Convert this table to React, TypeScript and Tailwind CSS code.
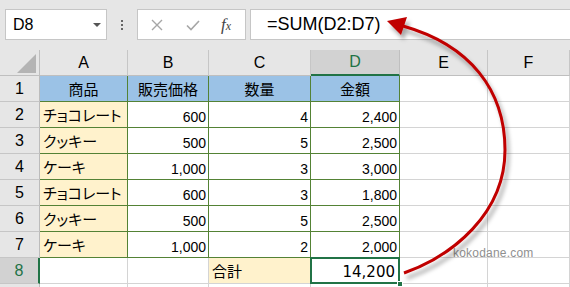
import React from "react";

const font = "font-['Liberation_Sans','Noto_Sans_CJK_JP',sans-serif]";

type Row = { a: string; b: string; c: string; d: string };

const rows: Row[] = [
  { a: "チョコレート", b: "600", c: "4", d: "2,400" },
  { a: "クッキー", b: "500", c: "5", d: "2,500" },
  { a: "ケーキ", b: "1,000", c: "3", d: "3,000" },
  { a: "チョコレート", b: "600", c: "3", d: "1,800" },
  { a: "クッキー", b: "500", c: "5", d: "2,500" },
  { a: "ケーキ", b: "1,000", c: "2", d: "2,000" },
];

function ColHead({ label, active }: { label: string; active?: boolean }) {
  return (
    <div
      className={
        active
          ? "flex items-center justify-center bg-[#d2d2d2] border-r border-[#bfbfbf] border-b-2 border-b-[#217346] text-[#217346] text-[16px]"
          : "flex items-center justify-center bg-[#e6e6e6] border-r border-[#c6c6c6] border-b border-b-[#bfbfbf] text-black text-[16px]"
      }
    >
      {label}
    </div>
  );
}

function RowHead({ n, active }: { n: number; active?: boolean }) {
  return (
    <div
      className={
        active
          ? "flex items-center justify-center bg-[#d2d2d2] border-b border-[#c6c6c6] border-r-2 border-r-[#217346] text-[#217346] text-[16px]"
          : "flex items-center justify-center bg-[#e6e6e6] border-b border-[#c6c6c6] border-r border-r-[#bcbcbc] text-black text-[16px]"
      }
    >
      {n}
    </div>
  );
}

const green = "border-r border-b border-[#548235]";
const gray = "border-r border-b border-[#d4d4d4]";

export default function App() {
  return (
    <div className={`relative w-[570px] h-[287px] overflow-hidden bg-white ${font}`}>
      {/* formula bar */}
      <div className="h-[50px] bg-[#e6e6e6] flex items-start pt-[9px]">
        <div className="ml-[5px] w-[102px] h-[31px] bg-white border border-[#c6c6c6] flex items-center pl-[7px] pr-[5px] text-[16px] text-black">
          <span className="flex-1">D8</span>
          <span className="w-0 h-0 border-l-[4px] border-r-[4px] border-t-[4px] border-l-transparent border-r-transparent border-t-[#555]" />
        </div>
        <div className="w-[30px] h-[31px] flex flex-col items-center justify-center gap-[2px]">
          <span className="w-[2px] h-[2px] bg-[#666]" />
          <span className="w-[2px] h-[2px] bg-[#666]" />
          <span className="w-[2px] h-[2px] bg-[#666]" />
        </div>
        <div className="w-[109px] h-[31px] bg-white border border-[#c6c6c6] flex items-center pl-[13px]">
          <svg width="12" height="12" viewBox="0 0 12 12">
            <path d="M1 1 L11 11 M11 1 L1 11" stroke="#a6a6a6" strokeWidth="1.4" />
          </svg>
          <svg width="14" height="12" viewBox="0 0 14 12" className="ml-[23px]">
            <path d="M1 6.5 L5 10.5 L13 2" stroke="#a6a6a6" strokeWidth="1.6" fill="none" />
          </svg>
          <span className="ml-[21px] text-[17px] italic text-[#444] font-['Liberation_Serif',serif] leading-none">
            f<span className="text-[12px]">x</span>
          </span>
        </div>
        <div className="ml-[4px] flex-1 h-[31px] bg-white border border-r-0 border-[#c6c6c6] flex items-center pl-[16px] text-[18px] text-black">
          =SUM(D2:D7)
        </div>
      </div>

      {/* sheet */}
      <div className="grid grid-cols-[40px_88px_81px_102px_89px_88px_82px] auto-rows-[26px]">
        <div className="flex items-end justify-end pr-[3px] pb-[2px] bg-[#e6e6e6] border-r border-b border-[#bfbfbf]">
          <svg width="19" height="19" viewBox="0 0 19 19" className="block shrink-0">
            <path d="M19 0 L19 19 L0 19 Z" fill="#b4b4b4" />
          </svg>
        </div>
        <ColHead label="A" />
        <ColHead label="B" />
        <ColHead label="C" />
        <ColHead label="D" active />
        <ColHead label="E" />
        <ColHead label="F" />

        <RowHead n={1} />
        <div className={`${green} bg-[#9bc2e6] flex items-center justify-center pt-[3px] text-[15px]`}>商品</div>
        <div className={`${green} bg-[#9bc2e6] flex items-center justify-center pt-[3px] text-[15px]`}>販売価格</div>
        <div className={`${green} bg-[#9bc2e6] flex items-center justify-center pt-[3px] text-[15px]`}>数量</div>
        <div className={`${green} bg-[#9bc2e6] flex items-center justify-center pt-[3px] text-[15px]`}>金額</div>
        <div className={gray} />
        <div className={gray} />

        {rows.map((r, i) => (
          <React.Fragment key={i}>
            <RowHead n={i + 2} />
            <div className={`${green} bg-[#fff2cc] flex items-center pl-[3px] pt-[4px] text-[15px] [font-feature-settings:'palt']`}>{r.a}</div>
            <div className={`${green} flex items-center justify-end pr-[2px] pt-[5px] text-[14px]`}>{r.b}</div>
            <div className={`${green} flex items-center justify-end pr-[2px] pt-[5px] text-[14px]`}>{r.c}</div>
            <div className={`${green} flex items-center justify-end pr-[2px] pt-[5px] text-[14px]`}>{r.d}</div>
            <div className={gray} />
            <div className={gray} />
          </React.Fragment>
        ))}

        <RowHead n={8} active />
        <div className={gray} />
        <div className={gray} />
        <div className="border-b border-[#d4d4d4] bg-[#fff2cc] flex items-center pl-[3px] pt-[4px] text-[15px]">合計</div>
        <div className="relative border-r border-b border-[#d4d4d4] flex items-center justify-end pr-[4px] pt-[4px] text-[15px] font-['DejaVu_Sans',sans-serif]">
          14,200
          <div className="absolute -left-px -top-px -right-px -bottom-px border-2 border-[#217346]" />
          <div className="absolute right-[-4px] bottom-[-4px] w-[6px] h-[6px] bg-[#217346] border border-white" />
        </div>
        <div className={gray} />
        <div className={gray} />

        <div className="bg-[#e6e6e6] border-r border-[#bcbcbc]" />
        <div className={gray} />
        <div className={gray} />
        <div className={gray} />
        <div className={gray} />
        <div className={gray} />
        <div className={gray} />
      </div>

      {/* watermark */}
      <div className="absolute left-[453px] top-[244px] text-[12px] text-[#8f8f8f] tracking-[0.2px] font-['Liberation_Sans',sans-serif]">
        kokodane.com
      </div>

      {/* arrow */}
      <svg className="absolute left-0 top-0 pointer-events-none" width="570" height="287" viewBox="0 0 570 287">
        <defs>
          <filter id="shadow" x="-20%" y="-20%" width="140%" height="140%">
            <feDropShadow dx="3" dy="5" stdDeviation="2" floodColor="#000" floodOpacity="0.35" />
          </filter>
        </defs>
        <g filter="url(#shadow)">
          <path
            d="M404 273 C452 256 505 214 505 150 C505 90 470 45 403 26"
            stroke="#c00000"
            strokeWidth="3"
            fill="none"
          />
          <polygon points="387,21 407,17 401,35" fill="#c00000" />
        </g>
      </svg>
    </div>
  );
}
